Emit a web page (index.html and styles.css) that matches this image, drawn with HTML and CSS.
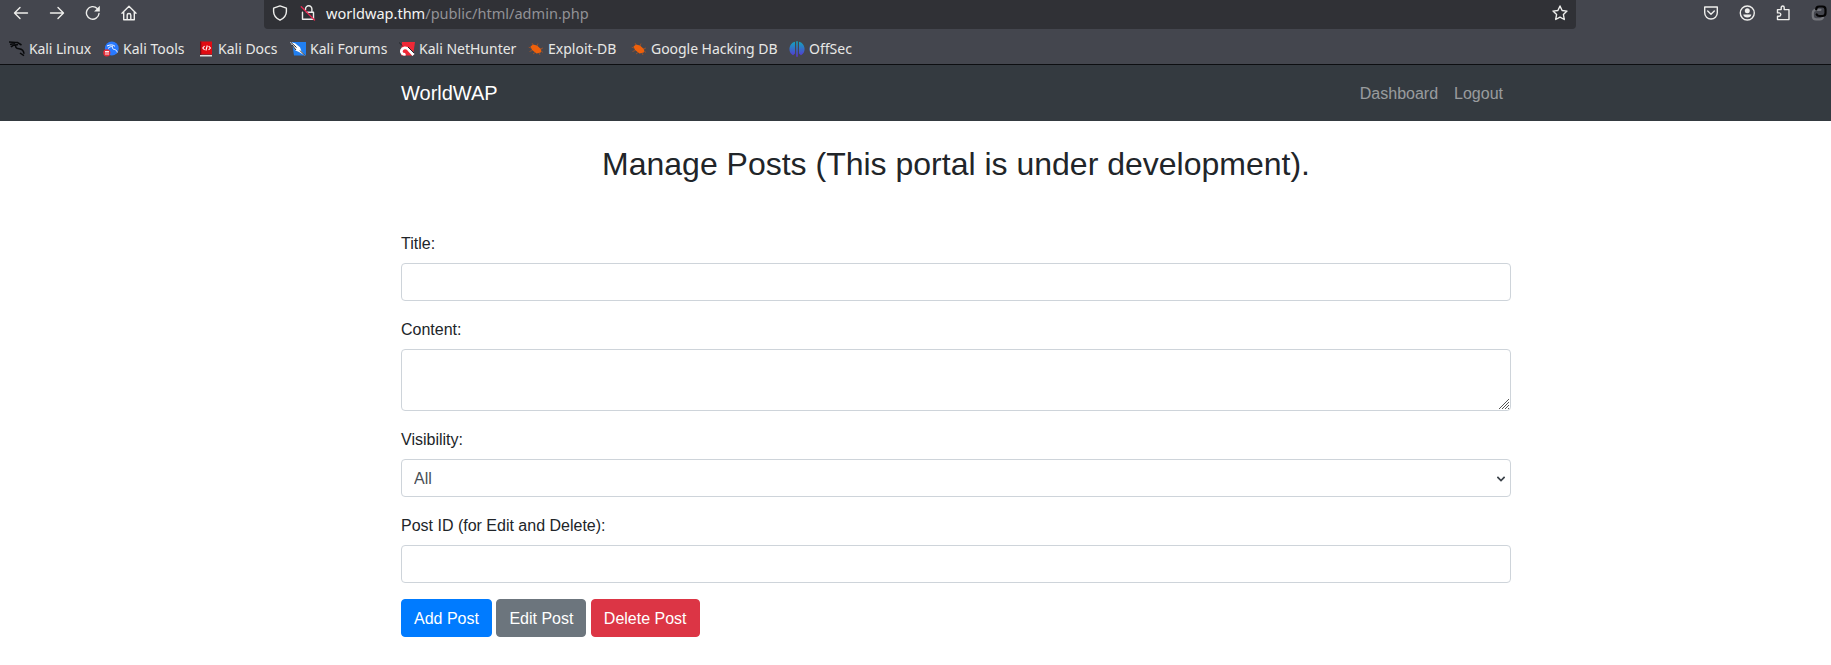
FILE: index.html
```html
<!DOCTYPE html>
<html lang="en">
<head>
<meta charset="utf-8">
<title>WorldWAP</title>
<link rel="stylesheet" href="styles.css">
</head>
<body>
<header class="browser">
  <div class="toolbar">
    <div class="nav-icons">
      <svg class="ico" viewBox="0 0 16 16"><path d="M14.500 8H1.600M7 2.500 1.500 8 7 13.500"/></svg>
      <svg class="ico" viewBox="0 0 16 16"><path d="M1.500 8h12.900M9 2.500 14.500 8 9 13.500"/></svg>
      <svg class="ico" viewBox="0 0 16 16"><path d="M14 8.500A6.300 6.300 0 1 1 12.200 3.500"/><path class="solid" d="M14.800.8v5.700H9.100z"/></svg>
      <svg class="ico" viewBox="0 0 16 16"><path d="M1 8.200 8 1.300l7 6.900M2.700 7v7.700h10.600V7M6.200 14.500v-4.200a1.800 1.800 0 0 1 3.600 0v4.200"/></svg>
    </div>
    <div class="urlbar">
      <svg class="ico" viewBox="0 0 16 16"><path d="M8 .9 14.400 3.200v3.300c0 4.300-3 7-6.400 8.700C4.600 13.500 1.600 10.800 1.600 6.500V3.200z"/></svg>
      <svg class="ico lock" viewBox="0 0 16 16"><path d="M5.500 5V4a3.200 3.200 0 0 1 6.400 0v3M6.500 7.300H13.500v7H2.500v-7"/><path class="strike" d="M1.300 1.800 14.500 15"/></svg>
      <span class="url"><b>worldwap.thm</b>/public/html/admin.php</span>
      <svg class="ico star" viewBox="0 0 16 16"><path d="m8 1 2.100 4.500 4.900.6-3.600 3.400.9 5L8 12.100l-4.300 2.400.9-5L1 6.100l4.900-.6z"/></svg>
    </div>
    <div class="tools">
      <svg class="ico" viewBox="0 0 16 16"><path d="M1.700 2h12.600v5.700a6.300 6.300 0 0 1-12.600 0zM4.700 6 8 9.200 11.300 6"/></svg>
      <svg class="ico" viewBox="0 0 16 16"><circle cx="8.300" cy="8" r="7"/><circle class="solid" cx="8.300" cy="5.700" r="2.500"/><path class="solid" d="M4.300 9.500h8c0 2-1.800 3-4 3s-4-1-4-3z"/></svg>
      <svg class="ico" viewBox="0 0 16 16"><path d="M2.500 7V4.600h3.700V2.500a1.500 1.500 0 0 1 3 0v2.100H14v10H2.500v-3.300h1.600a1.700 1.700 0 0 0 0-3.400H2.500z"/></svg>
      <svg class="ico" viewBox="0 0 16 16"><path class="link-back" d="M9.500 4.800H5a3.300 3.300 0 0 0-3.200 3.200v3.200a3.300 3.300 0 0 0 3.200 3.200h4a3.300 3.300 0 0 0 3.200-2.600"/><path class="link-front" d="M5.200 4.500a3 3 0 0 1 3-3H11.500a3 3 0 0 1 3 3v3.500a3 3 0 0 1-3 3H8.200a3 3 0 0 1-2.500-1.600"/></svg>
    </div>
  </div>
  <nav class="bookmarks">
    <a class="bm w-linux"><svg viewBox="0 0 16 16"><path class="ink-line" d="M0 1c3 .2 6 .2 8.500.5l4 2.500M1 3.500l5-1.200M2 6c1.500-2 4-2.500 7-2.300M7.500 3.500c-1.800 2-.5 4 2.500 4.300 3 .4 4.800 2 5 5M11 12l4 2.700"/></svg><span>Kali Linux</span></a>
    <a class="bm w-tools"><svg viewBox="0 0 16 16"><circle cx="8.800" cy="7.500" r="6.900" fill="#2879ff"/><path class="white-line" d="M4 5c3-1.500 6-1.500 8 .3M5 7.500c1.500-1.800 3.500-2 4.500-2-.5 2 .5 2.700 2 3 1.800.4 2.500 1.500 2.800 3"/><circle cx="3.800" cy="11.800" r="3.600" fill="#e52d38"/><path class="fine" d="M2 10.500h4M3 10.500V14M5 10.500V14"/></svg><span>Kali Tools</span></a>
    <a class="bm w-docs"><svg viewBox="0 0 16 16"><path d="M2 .5h12v13H2z" fill="#e00b12"/><path d="M2 .5h1.300V14H2z" fill="#750c14"/><path d="M2 14h12v1.500H2z" fill="#ddd"/><path class="fine bold" d="M6.600 5 4.800 7l1.800 2M10.600 5l1.800 2-1.800 2M9.300 4.500 7.900 9.500"/></svg><span>Kali Docs</span></a>
    <a class="bm w-forums"><svg viewBox="0 0 16 16"><path d="M2 1h14v13.500H4z" fill="#217ff0"/><path d="m0 1 5 1.200 5 4 1.200 3.500L15.500 15 9 11 5.500 9.500z" fill="#fff"/><path class="dark-line" d="m1 1.500 5.500 5M10 9.500l5 5M2 4l4 5"/></svg><span>Kali Forums</span></a>
    <a class="bm w-hunter"><svg viewBox="0 0 16 16"><path d="M3 1h13l-2 13.500H2z" fill="#ef2836"/><path class="horn" d="M14.500 14 9.500 8.500c-2-2.500-6-2-7 .8C1.500 12 4 14 6.500 13"/><path class="dark-line" d="m0 1.500 3.500 3.300M9 6l6 6"/></svg><span>Kali NetHunter</span></a>
    <a class="bm w-edb"><svg viewBox="0 0 16 16"><path d="M2.500 5.500 5 3.500l4 1 4.300 4-.5 3-4.300 1L4 9z" fill="#ee600b"/><path class="legs" d="m5 4-1-2M9 5l1-2.500M3 7 .7 6.200M4 9.500l-2.500 1M12 8l3-1M13 10l2 1.500M7 11.500l-2 1.500M11 12l1 2"/></svg><span>Exploit-DB</span></a>
    <a class="bm w-ghdb"><svg viewBox="0 0 16 16"><path d="M2.500 5.500 5 3.500l4 1 4.300 4-.5 3-4.300 1L4 9z" fill="#ee600b"/><path class="legs" d="m5 4-1-2M9 5l1-2.500M3 7 .7 6.200M4 9.500l-2.500 1M12 8l3-1M13 10l2 1.500M7 11.500l-2 1.500M11 12l1 2"/></svg><span>Google Hacking DB</span></a>
    <a class="bm w-offsec"><svg viewBox="0 0 16 16"><defs><linearGradient id="og" x2="0" y2="1"><stop stop-color="#11a7bd"/><stop offset="1" stop-color="#5933d2"/></linearGradient></defs><path fill="url(#og)" d="M6 .7v11.800l-2 1.800A7.500 7.500 0 0 1 6 .7zM7.200.3h1.600v15.400H7.200zM10 .7a7.500 7.500 0 0 1 2 13.600l-2-1.800z"/></svg><span>OffSec</span></a>
  </nav>
</header>
<nav class="navbar">
  <div class="container navbar-inner">
    <a class="brand">WorldWAP</a>
    <div class="links"><a>Dashboard</a><a>Logout</a></div>
  </div>
</nav>
<main class="container">
  <h2 class="heading">Manage Posts (This portal is under development).</h2>
  <form>
    <div class="group"><label for="title">Title:</label><input class="control" id="title" type="text"></div>
    <div class="group"><label for="content">Content:</label><div class="area"><textarea class="control" id="content" rows="2"></textarea><svg class="grip" viewBox="0 0 10 10"><path d="M0 10 10 0M3 10l7-7M6 10l4-4M9 10l1-1"/></svg></div></div>
    <div class="group"><label for="visibility">Visibility:</label><div class="area"><select class="control" id="visibility"><option>All</option></select><svg class="chevron" viewBox="0 0 8 6"><path d="m.4.900 3.600 3.600L7.600.900"/></svg></div></div>
    <div class="group"><label for="post">Post ID (for Edit and Delete):</label><input class="control" id="post" type="text"></div>
    <div class="actions"><button class="btn add" type="button">Add Post</button><button class="btn edit" type="button">Edit Post</button><button class="btn delete" type="button">Delete Post</button></div>
  </form>
</main>
</body>
</html>
```
FILE: styles.css
```css
* { box-sizing: border-box; }
body { margin: 0; background: #fff; color: #212529; font: 16px/1.5 "Liberation Sans", Arial, sans-serif; overflow: hidden; }

.browser { height: 65px; background: #44464e; border-bottom: 1px solid #0d0e11; font-family: "Noto Sans", sans-serif; color: #e8e8e6; }
.toolbar { display: flex; height: 29px; }
.ico { width: 16px; height: 16px; flex: none; fill: none; stroke: #eeeeec; stroke-width: 1.4; stroke-linejoin: round; stroke-linecap: round; }
.ico .solid { fill: #eeeeec; stroke: none; }
.ico .strike { stroke: #e22850; }
.nav-icons { display: flex; gap: 20px; width: 264px; padding: 5px 0 0 13px; }
.urlbar { display: flex; width: 1312px; height: 29px; padding: 5px 8px 0; background: #303136; border-radius: 0 0 4px 4px; }
.lock { margin-left: 12px; }
.url { margin-left: 10px; font-size: 14.55px; line-height: 16px; color: #929297; white-space: nowrap; }
.url b { font-weight: 400; color: #f4f4f2; }
.star { margin-left: auto; }
.tools { display: flex; gap: 20px; padding: 5px 0 0 127px; }
.link-back { stroke: #74767c; stroke-width: 2.2; }
.link-front { stroke: #050506; stroke-width: 2.2; }

.bookmarks { display: flex; height: 35px; padding: 5px 0 0 9px; align-items: center; }
.bm { display: flex; flex: none; gap: 4px; align-items: center; font-size: 14px; line-height: 20px; white-space: nowrap; }
.bm svg { width: 16px; height: 16px; flex: none; fill: none; }
.w-linux { width: 94px; letter-spacing: -.1px; }
.w-tools { width: 95px; }
.w-docs { width: 92px; }
.w-forums { width: 109px; }
.w-hunter { width: 129px; }
.w-edb { width: 103px; }
.w-ghdb { width: 158px; letter-spacing: -.04px; }
.ink-line { stroke: #08090b; stroke-width: 1.5; }
.white-line { stroke: #fff; stroke-width: 1; }
.fine { stroke: #fff; stroke-width: .9; }
.bold { stroke-width: 1.1; }
.dark-line { stroke: #20242a; stroke-width: 1; }
.horn { stroke: #fff; stroke-width: 2.8; }
.legs { stroke: #a65325; stroke-width: .8; }

.container { width: 1110px; margin-left: 401px; }
.navbar { height: 56px; background: #343a40; }
.navbar-inner { display: flex; height: 56px; padding-top: 2px; align-items: center; justify-content: space-between; }
.brand { padding-bottom: 2px; font-size: 20px; line-height: 30px; color: #fff; }
.links { display: flex; color: rgba(255, 255, 255, .5); }
.links a { padding: 0 8px; }

.heading { margin: 24px 0 48px; font-size: 32px; line-height: 38.4px; font-weight: 500; text-align: center; }
.group { margin-bottom: 16px; }
.group label { display: block; padding-top: 1px; margin-bottom: 7px; }
.control { display: block; width: 100%; height: 38px; padding: 7px 12px 5px; border: 1px solid #ced4da; border-radius: 4px; background: #fff; color: #495057; font: inherit; appearance: none; outline: none; }
textarea.control { height: 62px; resize: none; }
.area { position: relative; }
.grip { position: absolute; right: 2px; bottom: 2px; width: 10px; height: 10px; stroke: #555; stroke-width: 1; }
.chevron { position: absolute; right: 6px; top: 17px; width: 8px; height: 6px; fill: none; stroke: #394047; stroke-width: 1.6; }
.actions { display: flex; gap: 4.45px; }
.btn { height: 38px; padding: 7px 12px 5px; border: 1px solid; border-radius: 4px; color: #fff; font: inherit; }
.add { background: #007bff; border-color: #007bff; }
.edit { background: #6c757d; border-color: #6c757d; }
.delete { background: #dc3545; border-color: #dc3545; }
```
